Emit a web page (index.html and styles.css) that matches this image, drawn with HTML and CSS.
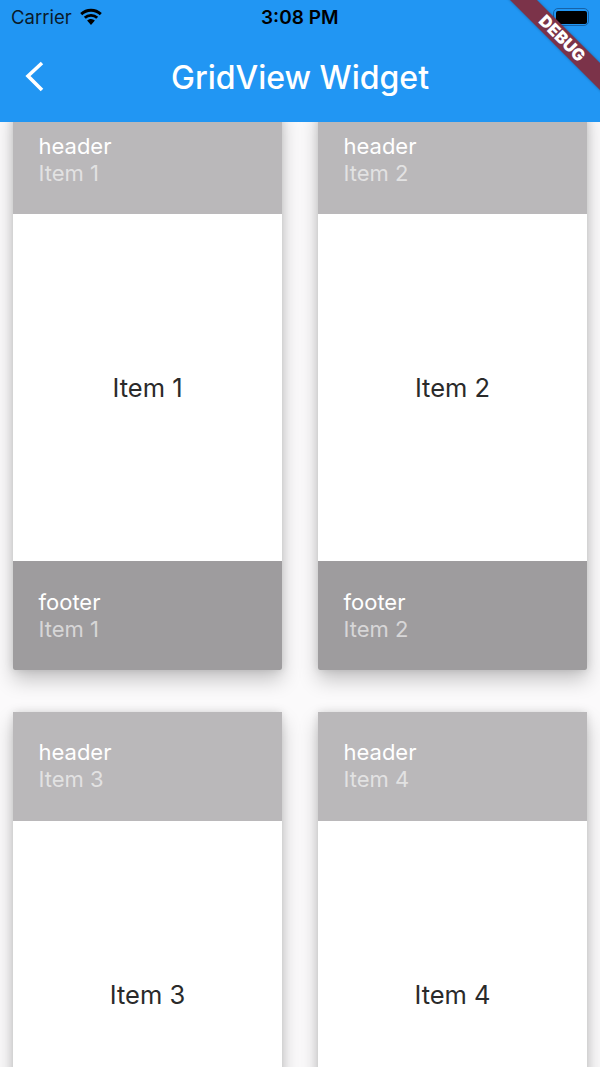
FILE: index.html
```html
<!DOCTYPE html>
<html lang="en">
<head>
    <meta charset="UTF-8">
    <meta name="viewport" content="width=device-width, initial-scale=1.0">
    <title>GridView Widget</title>
    <link rel="stylesheet" href="styles.css">
</head>
<body>
    <div class="screen">
        <div class="appbar">
            <div class="statusbar">
                <div class="status-left">
                    <span>Carrier</span>
                    <svg class="wifi" width="24" height="18" viewBox="0 0 24 17">
                        <path d="M12 3.200c3.400 0 6.500 1.300 8.800 3.500l2-2.100A15.600 15.600 0 0 0 12 .3 15.600 15.600 0 0 0 1.200 4.600l2 2.100A12.700 12.700 0 0 1 12 3.200z" fill="#000"/>
                        <path d="M12 8.300c2 0 3.800.8 5.200 2l2-2.100A10.400 10.400 0 0 0 12 5.400a10.400 10.400 0 0 0-7.200 2.800l2 2.100a7.600 7.600 0 0 1 5.200-2z" fill="#000"/>
                        <path d="M12 10.600c-1.500 0-2.900.6-3.900 1.500L12 16.500l3.900-4.400a5.700 5.700 0 0 0-3.900-1.500z" fill="#000"/>
                    </svg>
                </div>
                <div class="status-time">3:08 PM</div>
                <div class="battery"><div class="battery-fill"></div></div>
            </div>
            <div class="toolbar">
                <svg class="back" width="24" height="36" viewBox="0 0 24 36">
                    <path d="M20 5 L6 18 L20 32" fill="none" stroke="#fff" stroke-width="3.600"/>
                </svg>
                <h1>GridView Widget</h1>
            </div>
            <div class="debug-banner">DEBUG</div>
        </div>

        <div class="content">
            <div class="grid">
                <div class="card">
                    <div class="bar header"><span class="bar-title">header</span><span class="bar-sub">Item 1</span></div>
                    <div class="body">Item 1</div>
                    <div class="bar footer"><span class="bar-title">footer</span><span class="bar-sub">Item 1</span></div>
                </div>
                <div class="card">
                    <div class="bar header"><span class="bar-title">header</span><span class="bar-sub">Item 2</span></div>
                    <div class="body">Item 2</div>
                    <div class="bar footer"><span class="bar-title">footer</span><span class="bar-sub">Item 2</span></div>
                </div>
                <div class="card">
                    <div class="bar header"><span class="bar-title">header</span><span class="bar-sub">Item 3</span></div>
                    <div class="body">Item 3</div>
                    <div class="bar footer"></div>
                </div>
                <div class="card">
                    <div class="bar header"><span class="bar-title">header</span><span class="bar-sub">Item 4</span></div>
                    <div class="body">Item 4</div>
                    <div class="bar footer"></div>
                </div>
            </div>
        </div>
    </div>
</body>
</html>
```

FILE: styles.css
```css
* {
    box-sizing: border-box;
}
html, body {
    margin: 0;
    padding: 0;
}
body {
    font-family: Inter, "Liberation Sans", sans-serif;
    background: #fbfafb;
}
.screen {
    width: 600px;
    height: 1067px;
    overflow: hidden;
    display: flex;
    flex-direction: column;
}
.appbar {
    position: relative;
    z-index: 2;
    flex: none;
    height: 122px;
    overflow: hidden;
    background: #2196f3;
}
.statusbar {
    display: flex;
    align-items: center;
    height: 34px;
    padding: 0 11px;
    color: #0a1a2a;
    font-size: 18.500px;
}
.status-left {
    display: flex;
    align-items: center;
    gap: 7px;
    width: 250px;
}
.wifi {
    margin-top: -1px;
}
.status-time {
    font-weight: 600;
    font-size: 19px;
    color: #000;
}
.battery {
    margin-left: auto;
    width: 36px;
    height: 18px;
    border: 1.500px solid #1662a8;
    border-radius: 5px;
    padding: 1.500px;
}
.battery-fill {
    height: 100%;
    background: #000;
    border-radius: 2px;
}
.toolbar {
    position: relative;
    display: flex;
    align-items: center;
    justify-content: center;
    height: 88px;
    padding-bottom: 2px;
}
.back {
    position: absolute;
    left: 22px;
    top: 24px;
}
h1 {
    margin: 0;
    color: #fff;
    font-size: 32px;
    font-weight: 500;
}
.debug-banner {
    position: absolute;
    top: 28.500px;
    right: -42px;
    width: 160px;
    height: 19px;
    line-height: 19px;
    transform: rotate(45deg);
    background: #7b3349;
    box-shadow: 0 0 3px rgba(0,0,0,0.3);
    color: #fff;
    font-size: 16.500px;
    font-weight: 900;
    text-align: center;
}
.content {
    flex: 1;
    min-height: 0;
    overflow: hidden;
}
.grid {
    display: grid;
    grid-template-columns: 269px 269px;
    column-gap: 36px;
    row-gap: 42px;
    padding: 0 13px;
    margin-top: -16.500px;
}
.card {
    display: flex;
    flex-direction: column;
    height: 564.500px;
    background: #fff;
    border-radius: 2px;
    box-shadow: 0 10px 20px rgba(0,0,0,0.22), 0 0 9px rgba(0,0,0,0.12);
}
.bar {
    flex: none;
    display: flex;
    flex-direction: column;
    justify-content: center;
    height: 108.500px;
    padding: 0 25.500px;
    font-size: 22px;
    line-height: 27px;
}
.header {
    background: #bab8ba;
}
.footer {
    height: 109px;
    background: #9e9c9e;
    border-radius: 0 0 2px 2px;
}
.bar-title {
    color: #fff;
}
.bar-sub {
    color: rgba(255,255,255,0.6);
}
.body {
    flex: 1;
    display: flex;
    align-items: center;
    justify-content: center;
    color: #2a2a2a;
    font-size: 25.500px;
}
```
